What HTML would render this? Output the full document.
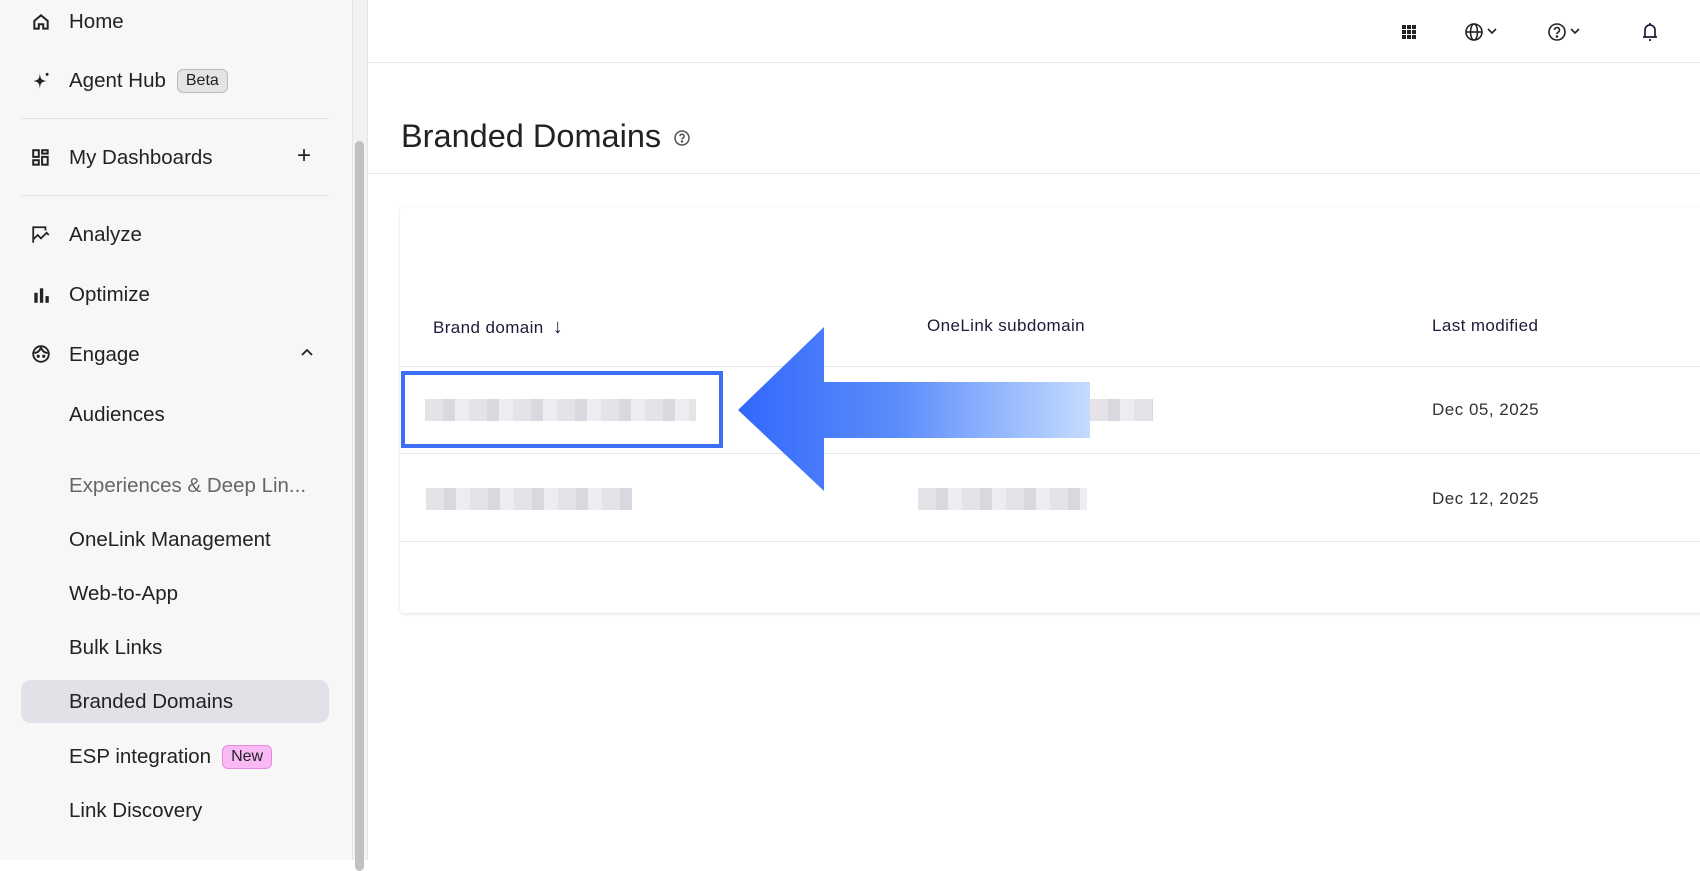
<!DOCTYPE html>
<html><head><meta charset="utf-8"><style>
*{margin:0;padding:0;box-sizing:border-box}
body{width:1700px;height:860px;overflow:hidden;background:#fff;font-family:"Liberation Sans",sans-serif;position:relative;color:#222}
.sb{position:absolute;left:0;top:0;width:352px;height:860px;background:#f7f7f7}
.track{position:absolute;left:352px;top:0;width:16px;height:860px;background:#f2f2f2;border-left:1px solid #e6e6e6;border-right:1px solid #e6e6e6}
.thumb{position:absolute;left:355px;top:141px;width:9px;height:730px;background:#c1c1c1;border-radius:5px}
.it{position:absolute;left:69px;font-size:20.5px;color:#222;line-height:24px;white-space:nowrap}
.ic{position:absolute;left:31px;width:20px;height:20px}
.div{position:absolute;left:21px;width:308px;height:1px;background:#e4e4e4}
.badge{display:inline-block;font-size:16px;padding:2px 8px;border-radius:6px;margin-left:11px;vertical-align:2px;line-height:18px}
.hl{position:absolute;left:21px;top:680px;width:308px;height:43px;background:#e3e1e8;border-radius:10px}
.top{position:absolute;left:368px;top:0;right:0;height:63px;border-bottom:1px solid #e6e6e6}
.title{position:absolute;left:401px;top:118px;font-size:32.5px;color:#222}
.hr2{position:absolute;left:368px;right:0;top:173px;height:1px;background:#e6e6e6}
.card{position:absolute;left:400px;top:207px;width:1320px;height:406px;background:#fff;box-shadow:0 1px 3px rgba(0,0,0,.12);border-radius:4px}
.th{position:absolute;top:316px;font-size:17px;letter-spacing:.4px;color:#1c1b3a}
.line{position:absolute;left:400px;right:0;height:1px;background:#e6e6ee}
.td{position:absolute;font-size:17px;letter-spacing:.5px;color:#333}
.blur{position:absolute;height:22px;background:repeating-linear-gradient(90deg,#e2e0e6 0 18px,#d6d4db 18px 30px,#eceaee 30px 44px);opacity:.9}
</style></head><body>
<div class="sb"></div>
<div class="track"></div><div class="thumb"></div>
<div class="hl"></div>
<svg class="ic" style="top:12px" viewBox="0 0 18 18" fill="none" stroke="#222" stroke-width="1.8"><path d="M3 8L9 3l6 5v7H11v-4H7v4H3z"/></svg>
<div class="it" style="top:10px">Home</div>
<svg class="ic" style="top:71px" viewBox="0 0 18 18"><path d="M8 2C8.5 7 9 8 14 9 9 10 8.5 11 8 16 7.5 11 7 10 2 9 7 8 7.5 7 8 2z" fill="#222"/><circle cx="14.5" cy="3" r="1.3" fill="#222"/></svg>
<div class="it" style="top:69px">Agent Hub<span class="badge" style="background:#e4e4e4;border:1px solid #bbb">Beta</span></div>
<div class="div" style="top:118px"></div>
<svg class="ic" style="top:148px" viewBox="0 0 18 18" fill="none" stroke="#222" stroke-width="1.8"><rect x="2" y="2" width="5" height="6"/><rect x="10" y="2" width="5" height="3"/><rect x="2" y="11" width="5" height="4"/><rect x="10" y="8" width="5" height="7"/></svg>
<div class="it" style="top:146px">My Dashboards</div>
<div style="position:absolute;left:297px;top:142px;font-size:24px;color:#222">+</div>
<div class="div" style="top:195px"></div>
<svg class="ic" style="top:225px" viewBox="0 0 18 18" fill="none" stroke="#222" stroke-width="1.6"><path d="M2 16V2h11v3M2 13l4-4 3 3 5-5 2 2"/></svg>
<div class="it" style="top:223px">Analyze</div>
<svg class="ic" style="top:285px" viewBox="0 0 18 18" fill="#222"><rect x="3" y="7" width="3" height="9"/><rect x="8" y="3" width="3" height="13"/><rect x="13" y="10" width="3" height="6"/></svg>
<div class="it" style="top:283px">Optimize</div>
<svg class="ic" style="top:344px" viewBox="0 0 18 18" fill="none" stroke="#222" stroke-width="1.7"><circle cx="9" cy="9" r="7"/><path d="M3 8c3 0 5-2 6-5M9 3c1 3 3 5 6 5"/><circle cx="6.5" cy="11" r=".6" fill="#222"/><circle cx="11.5" cy="11" r=".6" fill="#222"/></svg>
<div class="it" style="top:343px">Engage</div>
<svg style="position:absolute;left:300px;top:348px" width="14" height="10" viewBox="0 0 14 10" fill="none" stroke="#222" stroke-width="1.8"><path d="M2 7l5-5 5 5"/></svg>
<div class="it" style="top:403px">Audiences</div>
<div class="it" style="top:474px;color:#666">Experiences &amp; Deep Lin...</div>
<div class="it" style="top:528px">OneLink Management</div>
<div class="it" style="top:582px">Web-to-App</div>
<div class="it" style="top:636px">Bulk Links</div>
<div class="it" style="top:690px">Branded Domains</div>
<div class="it" style="top:745px">ESP integration<span class="badge" style="background:#f9b9f5;border:1px solid #e48ae0">New</span></div>
<div class="it" style="top:799px">Link Discovery</div>

<div class="top"></div>
<svg style="position:absolute;left:1401px;top:24px" width="16" height="16" viewBox="0 0 16 16" fill="#222"><rect x="1" y="1" width="4" height="4"/><rect x="6" y="1" width="4" height="4"/><rect x="11" y="1" width="4" height="4"/><rect x="1" y="6" width="4" height="4"/><rect x="6" y="6" width="4" height="4"/><rect x="11" y="6" width="4" height="4"/><rect x="1" y="11" width="4" height="4"/><rect x="6" y="11" width="4" height="4"/><rect x="11" y="11" width="4" height="4"/></svg>
<svg style="position:absolute;left:1464px;top:22px" width="40" height="20" viewBox="0 0 40 20" fill="none" stroke="#222" stroke-width="1.6"><circle cx="10" cy="10" r="8"/><ellipse cx="10" cy="10" rx="3.5" ry="8"/><path d="M2 10h16"/><path d="M24 7l4 4 4-4"/></svg>
<svg style="position:absolute;left:1547px;top:22px" width="40" height="20" viewBox="0 0 40 20" fill="none" stroke="#222" stroke-width="1.6"><circle cx="10" cy="10" r="8"/><path d="M7.5 8a2.5 2.5 0 1 1 3.5 2.3c-.8.4-1 1-1 1.8"/><circle cx="10" cy="14.5" r=".5" fill="#222"/><path d="M24 7l4 4 4-4"/></svg>
<svg style="position:absolute;left:1641px;top:21px" width="18" height="22" viewBox="0 0 18 22" fill="none" stroke="#1c1b3a" stroke-width="1.7"><path d="M4 16V9a5 5 0 0 1 10 0v7M2 16h14M8 19h2"/><path d="M9 2v2"/></svg>

<div class="title">Branded Domains</div>
<svg style="position:absolute;left:673px;top:129px" width="18" height="18" viewBox="0 0 18 18" fill="none" stroke="#555" stroke-width="1.5"><circle cx="9" cy="9" r="7"/><path d="M7 7.3a2 2 0 1 1 2.8 1.8c-.6.3-.8.7-.8 1.4"/><circle cx="9" cy="12.5" r=".5" fill="#555"/></svg>
<div class="hr2"></div>
<div class="card"></div>
<div class="th" style="left:433px">Brand domain <span style="font-size:20px;margin-left:4px">↓</span></div>
<div class="th" style="left:927px">OneLink subdomain</div>
<div class="th" style="left:1432px">Last modified</div>
<div class="line" style="top:366px"></div>
<div class="line" style="top:453px"></div>
<div class="line" style="top:541px"></div>
<div class="blur" style="left:425px;top:399px;width:271px"></div>
<div class="blur" style="left:1090px;top:399px;width:63px"></div>
<div class="td" style="left:1432px;top:400px">Dec 05, 2025</div>
<div class="blur" style="left:426px;top:488px;width:206px"></div>
<div class="blur" style="left:918px;top:488px;width:169px"></div>
<div class="td" style="left:1432px;top:489px">Dec 12, 2025</div>
<div style="position:absolute;left:401px;top:371px;width:322px;height:77px;border:4px solid #3b6ff5"></div>
<svg style="position:absolute;left:736px;top:325px" width="360" height="170" viewBox="0 0 360 170">
<defs><linearGradient id="g" x1="0" x2="1"><stop offset="0" stop-color="#3268fb"/><stop offset=".45" stop-color="#5b8cfb"/><stop offset="1" stop-color="#c5dcff"/></linearGradient></defs>
<path d="M2 85L88 2V57H354V113H88V166Z" fill="url(#g)"/></svg>
</body></html>
